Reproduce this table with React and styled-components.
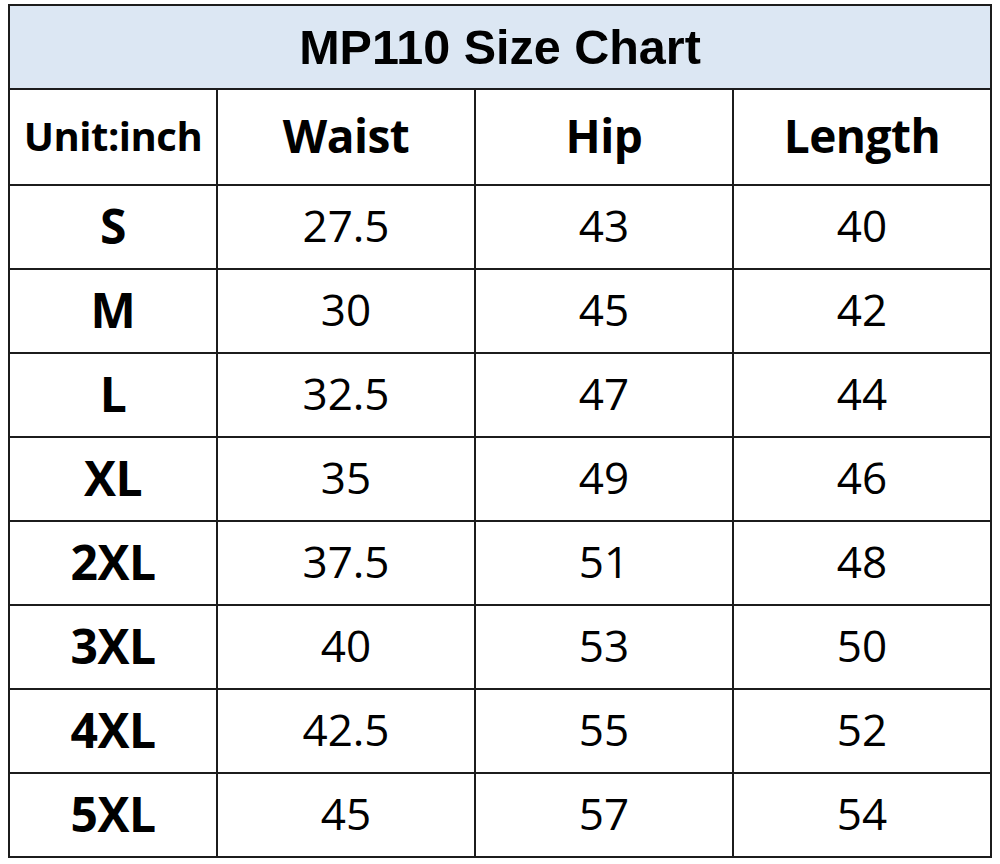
import React from "react";
import styled, { createGlobalStyle } from "styled-components";

const Global = createGlobalStyle`
  html, body { margin: 0; padding: 0; background: #ffffff; }
  body { font-family: "Open Sans", "Noto Sans", sans-serif; color: #000; }
`;

const Page = styled.div`
  padding: 4px 8px 0 8px;
`;

const Chart = styled.div`
  display: grid;
  grid-template-columns: 206px 256px 256px 256px;
  grid-template-rows: 82px 94px repeat(8, 82px);
  gap: 2px;
  padding: 2px;
  background: #1c1c1c;
  width: max-content;
`;

const Title = styled.div`
  grid-column: 1 / -1;
  background: #dce7f3;
  display: flex;
  align-items: center;
  justify-content: center;
  font-family: "Liberation Sans", Arial, sans-serif;
  font-weight: 700;
  font-size: 48.5px;
`;

const Cell = styled.div`
  background: #ffffff;
  display: flex;
  align-items: center;
  justify-content: center;
  padding-bottom: 4px;
  font-family: "Open Sans", "Noto Sans", sans-serif;
  font-size: ${(p) => p.$size}px;
  font-weight: ${(p) => (p.$bold ? 700 : 400)};
  letter-spacing: ${(p) => (p.$bold ? "-0.5px" : "0")};
  white-space: nowrap;
`;

const headers = ["Waist", "Hip", "Length"];
const rows = [
  ["S", "27.5", "43", "40"],
  ["M", "30", "45", "42"],
  ["L", "32.5", "47", "44"],
  ["XL", "35", "49", "46"],
  ["2XL", "37.5", "51", "48"],
  ["3XL", "40", "53", "50"],
  ["4XL", "42.5", "55", "52"],
  ["5XL", "45", "57", "54"],
];

export default function App() {
  return (
    <Page>
      <Global />
      <Chart>
        <Title>MP110 Size Chart</Title>
        <Cell $bold $size={40}>Unit:inch</Cell>
        {headers.map((h) => (
          <Cell key={h} $bold $size={46}>
            {h}
          </Cell>
        ))}
        {rows.map((r) =>
          r.map((v, i) => (
            <Cell key={r[0] + i} $bold={i === 0} $size={i === 0 ? 48 : 44}>
              {v}
            </Cell>
          ))
        )}
      </Chart>
    </Page>
  );
}
